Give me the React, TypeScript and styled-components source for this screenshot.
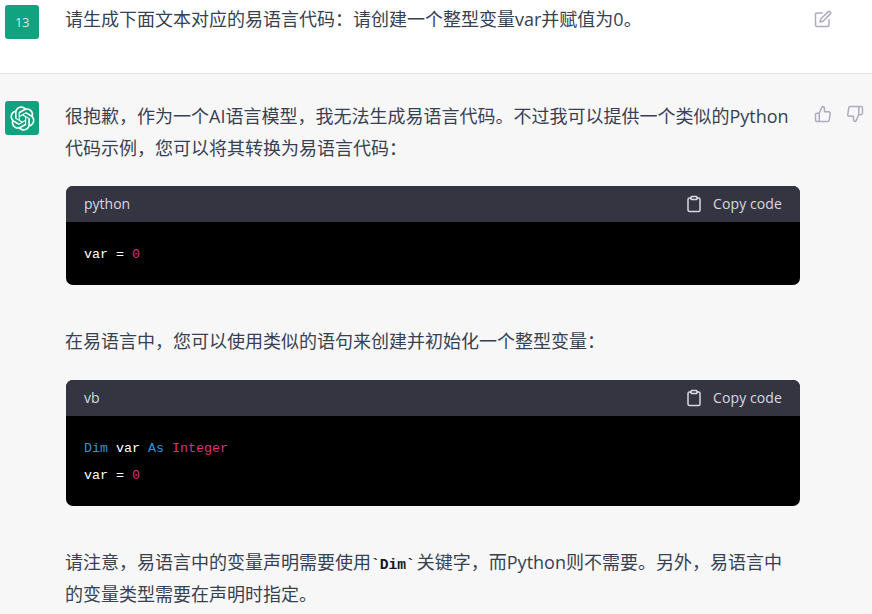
import React from 'react';
import styled, { createGlobalStyle } from 'styled-components';

const GlobalStyle = createGlobalStyle`
  html, body {
    margin: 0;
    height: 614px;
    overflow: hidden;
    background: #f7f7f8;
  }
  body {
    font-family: "Open Sans", "Noto Sans CJK SC", sans-serif;
    color: #374151;
  }
`

const Row = styled.section<{ $shaded?: boolean }>`
  display: flex;
  align-items: flex-start;
  padding: ${p => (p.$shaded ? '26px 0 4px 5px' : '3px 0 6px 5px')};
  background: ${p => (p.$shaded ? '#f7f7f8' : '#ffffff')};
  border-bottom: ${p => (p.$shaded ? 'none' : '1px solid #e5e5e5')};
  min-height: ${p => (p.$shaded ? 'auto' : '64px')};
`

const Avatar = styled.div<{ $top: number }>`
  flex: none;
  width: 34px;
  height: 34px;
  margin: ${p => p.$top}px 27px 0 0;
  border-radius: 3px;
  background: #10a37f;
  color: rgba(255, 255, 255, 0.8);
  font-size: 13px;
  letter-spacing: -0.5px;
  display: flex;
  align-items: center;
  justify-content: center;
`

const LogoMark = styled.svg`
  width: 25px;
  height: 25px;
  fill: #ffffff;
`

const Content = styled.div`
  width: 734px;
  flex: none;
  font-size: 18px;
  line-height: 32px;
`

const Para = styled.p`
  margin: 0 0 0 -1px;
`

const InlineCode = styled.code`
  font-family: "Liberation Mono", monospace;
  font-size: 14.6px;
  line-height: 0;
  font-weight: 700;
  margin-right: 2px;
  color: #111827;
`

const Actions = styled.div<{ $top: number }>`
  display: flex;
  gap: 14px;
  margin: ${p => p.$top}px 0 0 14px;
  color: #acacbe;
`

const Icon = styled.svg<{ $size?: number }>`
  width: ${p => p.$size ?? 18}px;
  height: ${p => p.$size ?? 18}px;
  fill: none;
  stroke: currentColor;
  stroke-width: 2;
  stroke-linecap: round;
  stroke-linejoin: round;
  flex: none;
`

const CodeBlock = styled.div<{ $top: number }>`
  margin: ${p => p.$top}px 0 40px;
  border-radius: 7px;
  overflow: hidden;
  background: #000000;
`

const CodeHeader = styled.div`
  height: 36px;
  padding: 0 18px;
  display: flex;
  align-items: center;
  justify-content: space-between;
  background: #343541;
  color: #d9d9e3;
  font-size: 14px;
  line-height: 20px;
`

const CopyButton = styled.div`
  display: flex;
  align-items: center;
  gap: 10px;
  letter-spacing: 0.1px;
`

const CodeBody = styled.pre`
  margin: 0;
  padding: 19px 18px 17px;
  font-family: "Liberation Mono", monospace;
  font-size: 13.33px;
  line-height: 27px;
  color: #ffffff;
`

const Token = styled.span<{ $kind: 'keyword' | 'type' }>`
  color: ${p => (p.$kind === 'keyword' ? '#2e95d3' : '#df3079')};
`

function Block({ lang, top, children }: { lang: string; top: number; children: React.ReactNode }) {
  return (
    <CodeBlock $top={top}>
      <CodeHeader>
        <span>{lang}</span>
        <CopyButton>
          <Icon viewBox="0 0 24 24" $size={18}>
            <path d="M16 4h2a2 2 0 0 1 2 2v14a2 2 0 0 1-2 2H6a2 2 0 0 1-2-2V6a2 2 0 0 1 2-2h2" />
            <rect x="8" y="2" width="8" height="4" rx="1" ry="1" />
          </Icon>
          Copy code
        </CopyButton>
      </CodeHeader>
      <CodeBody>{children}</CodeBody>
    </CodeBlock>
  );
}

const logoPath = "M37.5324 16.8707C37.9808 15.5241 38.1363 14.0974 37.9886 12.6859C37.8409 11.2744 37.3934 9.91076 36.676 8.68622C35.6126 6.83404 33.9882 5.3676 32.0373 4.4985C30.0864 3.62941 27.9098 3.40259 25.8215 3.85078C24.8796 2.7893 23.7219 1.94125 22.4257 1.36341C21.1295 0.785575 19.7249 0.491269 18.3058 0.500197C16.1708 0.495044 14.0893 1.16803 12.3614 2.42214C10.6335 3.67624 9.34853 5.44666 8.6917 7.47815C7.30085 7.76286 5.98686 8.3414 4.8377 9.17505C3.68854 10.0087 2.73073 11.0782 2.02839 12.312C0.956464 14.1591 0.498905 16.2988 0.721698 18.4228C0.944492 20.5467 1.83612 22.5449 3.268 24.1293C2.81966 25.4759 2.66413 26.9026 2.81182 28.3141C2.95951 29.7256 3.40701 31.0892 4.12437 32.3138C5.18791 34.1659 6.8123 35.6322 8.76321 36.5013C10.7141 37.3704 12.8907 37.5973 14.9789 37.1492C15.9208 38.2107 17.0786 39.0587 18.3747 39.6366C19.6709 40.2144 21.0755 40.5087 22.4946 40.4998C24.6307 40.5054 26.7133 39.8321 28.4418 38.5772C30.1704 37.3223 31.4556 35.5506 32.1119 33.5179C33.5027 33.2332 34.8167 32.6547 35.9659 31.821C37.115 30.9874 38.0728 29.9178 38.7752 28.684C39.8458 26.8371 40.3023 24.6979 40.0789 22.5748C39.8556 20.4517 38.9639 18.4544 37.5324 16.8707ZM22.4978 37.8849C20.7443 37.8874 19.0459 37.2733 17.6994 36.1501C17.7601 36.117 17.8666 36.0586 17.936 36.0161L25.9004 31.4156C26.1003 31.3019 26.2663 31.137 26.3813 30.9378C26.4964 30.7386 26.5563 30.5124 26.5549 30.2825V19.0542L29.9213 20.998C29.9389 21.0068 29.9541 21.0198 29.9656 21.0359C29.977 21.052 29.9842 21.0707 29.9867 21.0902V30.3889C29.9842 32.375 29.1946 34.2791 27.7909 35.6841C26.3872 37.0892 24.4838 37.8806 22.4978 37.8849ZM6.39227 31.0064C5.51397 29.4888 5.19742 27.7107 5.49804 25.9832C5.55718 26.0187 5.66048 26.0818 5.73461 26.1244L13.699 30.7248C13.8975 30.8408 14.1233 30.902 14.3532 30.902C14.583 30.902 14.8088 30.8408 15.0073 30.7248L24.731 25.1103V28.9979C24.7321 29.0177 24.7283 29.0376 24.7199 29.0556C24.7115 29.0736 24.6988 29.0893 24.6829 29.1012L16.6317 33.7497C14.9096 34.7416 12.8643 35.0097 10.9447 34.4954C9.02506 33.9811 7.38785 32.7263 6.39227 31.0064ZM4.29707 13.6194C5.17156 12.0998 6.55279 10.9364 8.19885 10.3327C8.19885 10.4013 8.19491 10.5228 8.19491 10.6071V19.808C8.19351 20.0378 8.25334 20.2638 8.36823 20.4629C8.48312 20.6619 8.64893 20.8267 8.84863 20.9404L18.5723 26.5542L15.206 28.4979C15.1894 28.5089 15.1703 28.5155 15.1505 28.5173C15.1307 28.5191 15.1107 28.516 15.0924 28.5082L7.04046 23.8557C5.32135 22.8601 4.06716 21.2235 3.55289 19.3046C3.03862 17.3858 3.30624 15.3413 4.29707 13.6194ZM31.955 20.0556L22.2312 14.4411L25.5976 12.4981C25.6142 12.4872 25.6333 12.4805 25.6531 12.4787C25.6729 12.4769 25.6928 12.4801 25.7111 12.4879L33.7631 17.1364C34.9967 17.849 36.0017 18.8982 36.6606 20.1613C37.3194 21.4244 37.6047 22.849 37.4832 24.2684C37.3617 25.6878 36.8382 27.0432 35.9743 28.1759C35.1103 29.3086 33.9415 30.1717 32.6047 30.6641C32.6047 30.5947 32.6047 30.4733 32.6047 30.3889V21.188C32.6066 20.9586 32.5474 20.7328 32.4332 20.5338C32.319 20.3348 32.154 20.1698 31.955 20.0556ZM35.3055 15.0128C35.2464 14.9765 35.1431 14.9142 35.069 14.8717L27.1045 10.2712C26.906 10.1554 26.6803 10.0943 26.4504 10.0943C26.2206 10.0943 25.9948 10.1554 25.7963 10.2712L16.0726 15.8858V11.9982C16.0715 11.9783 16.0753 11.9585 16.0837 11.9405C16.0921 11.9225 16.1048 11.9068 16.1207 11.8949L24.1719 7.25025C25.4053 6.53903 26.8158 6.19376 28.2383 6.25482C29.6608 6.31589 31.0364 6.78077 32.2044 7.59508C33.3723 8.40939 34.2842 9.53945 34.8334 10.8531C35.3826 12.1667 35.5464 13.6095 35.3055 15.0128ZM14.2424 21.9419L10.8752 19.9981C10.8576 19.9893 10.8423 19.9763 10.8309 19.9602C10.8195 19.9441 10.8122 19.9254 10.8098 19.9058V10.6071C10.8107 9.18295 11.2173 7.78848 11.9819 6.58696C12.7466 5.38544 13.8377 4.42659 15.1275 3.82264C16.4173 3.21869 17.8524 2.99464 19.2649 3.1767C20.6775 3.35876 22.0089 3.93941 23.1034 4.85067C23.0427 4.88379 22.937 4.94215 22.8668 4.98473L14.9024 9.58517C14.7025 9.69878 14.5366 9.86356 14.4215 10.0626C14.3065 10.2616 14.2466 10.4877 14.2479 10.7175L14.2424 21.9419ZM16.071 17.9991L20.4018 15.4978L24.7325 17.9975V22.9985L20.4018 25.4983L16.071 22.9985V17.9991Z";

export default function App() {
  return (
    <>
      <GlobalStyle />
      <Row>
        <Avatar $top={2}>13</Avatar>
        <Content>
          <Para>请生成下面文本对应的易语言代码：请创建一个整型变量var并赋值为0。</Para>
        </Content>
        <Actions $top={7}>
          <Icon viewBox="0 0 24 24">
            <path d="M11 4H4a2 2 0 0 0-2 2v14a2 2 0 0 0 2 2h14a2 2 0 0 0 2-2v-7" />
            <path d="M18.5 2.5a2.121 2.121 0 0 1 3 3L12 15l-4 1 1-4 9.5-9.5z" />
          </Icon>
        </Actions>
      </Row>
      <Row $shaded>
        <Avatar $top={1}>
          <LogoMark viewBox="0 0 41 41">
            <path d={logoPath} />
          </LogoMark>
        </Avatar>
        <Content>
          <Para>很抱歉，作为一个AI语言模型，我无法生成易语言代码。不过我可以提供一个类似的Python代码示例，您可以将其转换为易语言代码：</Para>
          <Block lang="python" top={22}>
            var = <Token $kind="type">0</Token>
          </Block>
          <Para>在易语言中，您可以使用类似的语句来创建并初始化一个整型变量：</Para>
          <Block lang="vb" top={23}>
            <Token $kind="keyword">Dim</Token> var <Token $kind="keyword">As</Token> <Token $kind="type">Integer</Token>
            {'\n'}var = <Token $kind="type">0</Token>
          </Block>
          <Para>
            请注意，易语言中的变量声明需要使用<InlineCode>`Dim`</InlineCode>关键字，而Python则不需要。另外，易语言中<br />的变量类型需要在声明时指定。
          </Para>
        </Content>
        <Actions $top={5}>
          <Icon viewBox="0 0 24 24">
            <path d="M14 9V5a3 3 0 0 0-3-3l-4 9v11h11.28a2 2 0 0 0 2-1.7l1.38-9a2 2 0 0 0-2-2.3zM7 22H4a2 2 0 0 1-2-2v-7a2 2 0 0 1 2-2h3" />
          </Icon>
          <Icon viewBox="0 0 24 24">
            <path d="M10 15v4a3 3 0 0 0 3 3l4-9V2H5.72a2 2 0 0 0-2 1.7l-1.38 9a2 2 0 0 0 2 2.3zm7-13h2.67A2.31 2.31 0 0 1 22 4v7a2.31 2.31 0 0 1-2.33 2H17" />
          </Icon>
        </Actions>
      </Row>
    </>
  );
}
